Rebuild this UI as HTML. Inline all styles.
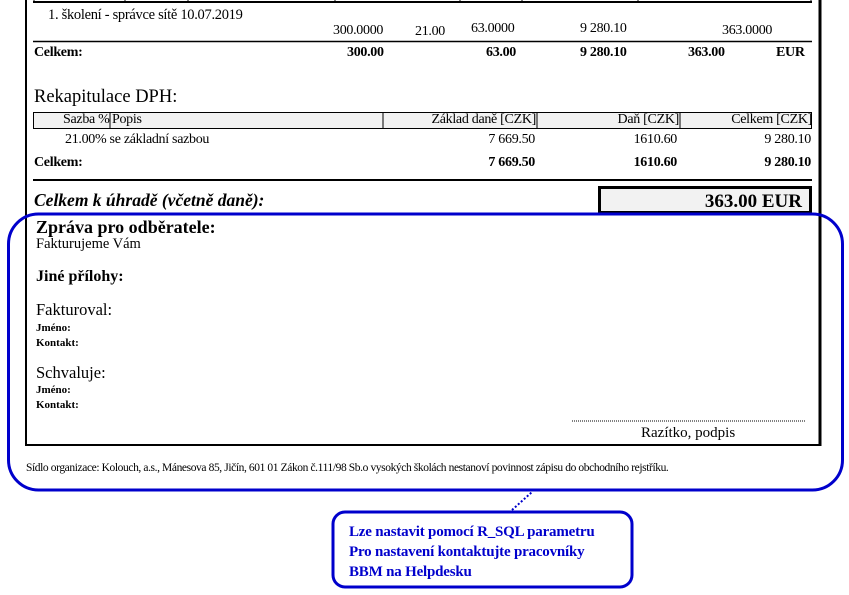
<!DOCTYPE html>
<html><head><meta charset="utf-8"><style>
body{margin:0;width:849px;height:595px;background:#fff;position:relative;overflow:hidden;font-family:"Liberation Serif",serif;color:#000}
.a{position:absolute;white-space:nowrap;line-height:1}
.r{text-align:right}
.b{font-weight:bold}
.s{font-size:12px;letter-spacing:-0.3px}
</style></head><body>
<svg width="849" height="595" style="position:absolute;left:0;top:0">
<line x1="26" y1="0" x2="26" y2="446" stroke="#000" stroke-width="2"/>
<line x1="820" y1="0" x2="820" y2="446" stroke="#000" stroke-width="3"/>
<line x1="25" y1="445" x2="821" y2="445" stroke="#000" stroke-width="2"/>
<line x1="33" y1="2" x2="812" y2="2" stroke="#000" stroke-width="2"/>
<g stroke="#000" stroke-width="1">
<line x1="34" y1="0" x2="34" y2="3"/><line x1="125" y1="0" x2="125" y2="3"/><line x1="188" y1="0" x2="188" y2="3"/><line x1="335" y1="0" x2="335" y2="3"/><line x1="460" y1="0" x2="460" y2="3"/><line x1="522" y1="0" x2="522" y2="3"/><line x1="638" y1="0" x2="638" y2="3"/><line x1="811" y1="0" x2="811" y2="3"/>
</g>
<line x1="33" y1="41.5" x2="812" y2="41.5" stroke="#000" stroke-width="1.5"/>
<rect x="33.5" y="112.5" width="778" height="16" fill="#f2f2f2" stroke="#000" stroke-width="1"/>
<g stroke="#000" stroke-width="1"><line x1="110" y1="113" x2="110" y2="128"/><line x1="383" y1="113" x2="383" y2="128"/><line x1="537" y1="113" x2="537" y2="128"/><line x1="680" y1="113" x2="680" y2="128"/></g>
<line x1="33" y1="180" x2="812" y2="180" stroke="#000" stroke-width="2"/>
<rect x="599.5" y="187.5" width="211" height="25" fill="#f2f2f2" stroke="#000" stroke-width="3"/>
<rect x="8.5" y="214" width="834" height="276" rx="30" fill="none" stroke="#0000cc" stroke-width="3"/>
<rect x="333" y="512" width="299" height="75" rx="12" fill="#fff" stroke="#0000cc" stroke-width="3"/>
<line x1="512" y1="510" x2="532" y2="492" stroke="#0000cc" stroke-width="2" stroke-dasharray="2,2"/>
<line x1="572" y1="421" x2="806" y2="421" stroke="#000" stroke-width="1" stroke-dasharray="1,1"/>
</svg>

<div class="a s" style="left:48px;top:8px;font-size:14.5px">1. školení - správce sítě 10.07.2019</div>
<div class="a s" style="left:333px;top:24px;font-size:14px">300.0000</div>
<div class="a s" style="left:415px;top:25px;font-size:14px">21.00</div>
<div class="a s" style="left:471px;top:22px;font-size:14px">63.0000</div>
<div class="a s" style="left:580px;top:22px;font-size:14px">9 280.10</div>
<div class="a s" style="left:722px;top:24px;font-size:14px">363.0000</div>

<div class="a s b" style="left:34px;top:46px;font-size:14px">Celkem:</div>
<div class="a s b" style="left:347px;top:46px;font-size:14px">300.00</div>
<div class="a s b" style="left:486px;top:46px;font-size:14px">63.00</div>
<div class="a s b" style="left:580px;top:46px;font-size:14px">9 280.10</div>
<div class="a s b" style="left:688px;top:46px;font-size:14px">363.00</div>
<div class="a s b" style="left:776px;top:46px;font-size:14px">EUR</div>

<div class="a" style="left:34px;top:88px;font-size:18.5px">Rekapitulace DPH:</div>

<div class="a s" style="left:63px;top:113px;font-size:14px">Sazba %</div>
<div class="a s" style="left:112px;top:113px;font-size:14px">Popis</div>
<div class="a s r" style="left:380px;width:156px;top:113px;font-size:14px">Základ daně [CZK]</div>
<div class="a s r" style="left:540px;width:139px;top:113px;font-size:14px">Daň [CZK]</div>
<div class="a s r" style="left:682px;width:130px;top:113px;font-size:14px">Celkem [CZK]</div>

<div class="a s" style="left:65px;top:133px;font-size:14px">21.00% se základní sazbou</div>
<div class="a s r" style="left:400px;width:135px;top:133px;font-size:14px">7 669.50</div>
<div class="a s r" style="left:540px;width:137px;top:133px;font-size:14px">1610.60</div>
<div class="a s r" style="left:682px;width:129px;top:133px;font-size:14px">9 280.10</div>

<div class="a s b" style="left:34px;top:156px;font-size:14px">Celkem:</div>
<div class="a s b r" style="left:400px;width:135px;top:156px;font-size:14px">7 669.50</div>
<div class="a s b r" style="left:540px;width:137px;top:156px;font-size:14px">1610.60</div>
<div class="a s b r" style="left:682px;width:129px;top:156px;font-size:14px">9 280.10</div>

<div class="a b" style="left:34px;top:192px;font-size:17.5px;font-style:italic">Celkem k úhradě (včetně daně):</div>
<div class="a b r" style="left:600px;width:202px;top:192px;font-size:19px">363.00 EUR</div>

<div class="a b" style="left:36px;top:218px;font-size:18px">Zpráva pro odběratele:</div>
<div class="a" style="left:36px;top:237px;font-size:14.5px">Fakturujeme Vám</div>
<div class="a b" style="left:36px;top:269px;font-size:16px">Jiné přílohy:</div>
<div class="a" style="left:36px;top:302px;font-size:16.5px">Fakturoval:</div>
<div class="a b" style="left:36px;top:323px;font-size:11px">Jméno:</div>
<div class="a b" style="left:36px;top:338px;font-size:11px">Kontakt:</div>
<div class="a" style="left:36px;top:365px;font-size:16.5px">Schvaluje:</div>
<div class="a b" style="left:36px;top:385px;font-size:11px">Jméno:</div>
<div class="a b" style="left:36px;top:400px;font-size:11px">Kontakt:</div>

<div class="a" style="left:641px;top:426px;font-size:15px">Razítko, podpis</div>

<div class="a" style="left:26px;top:463px;font-size:11.5px;letter-spacing:-0.4px">Sídlo organizace: Kolouch, a.s., Mánesova 85, Jičín, 601 01 Zákon č.111/98 Sb.o vysokých školách nestanoví povinnost zápisu do obchodního rejstříku.</div>

<div class="a b" style="left:349px;top:522px;font-size:15px;color:#0000cc;line-height:20px;letter-spacing:-0.2px">Lze nastavit pomocí R_SQL parametru<br>Pro nastavení kontaktujte pracovníky<br>BBM na Helpdesku</div>
</body></html>
